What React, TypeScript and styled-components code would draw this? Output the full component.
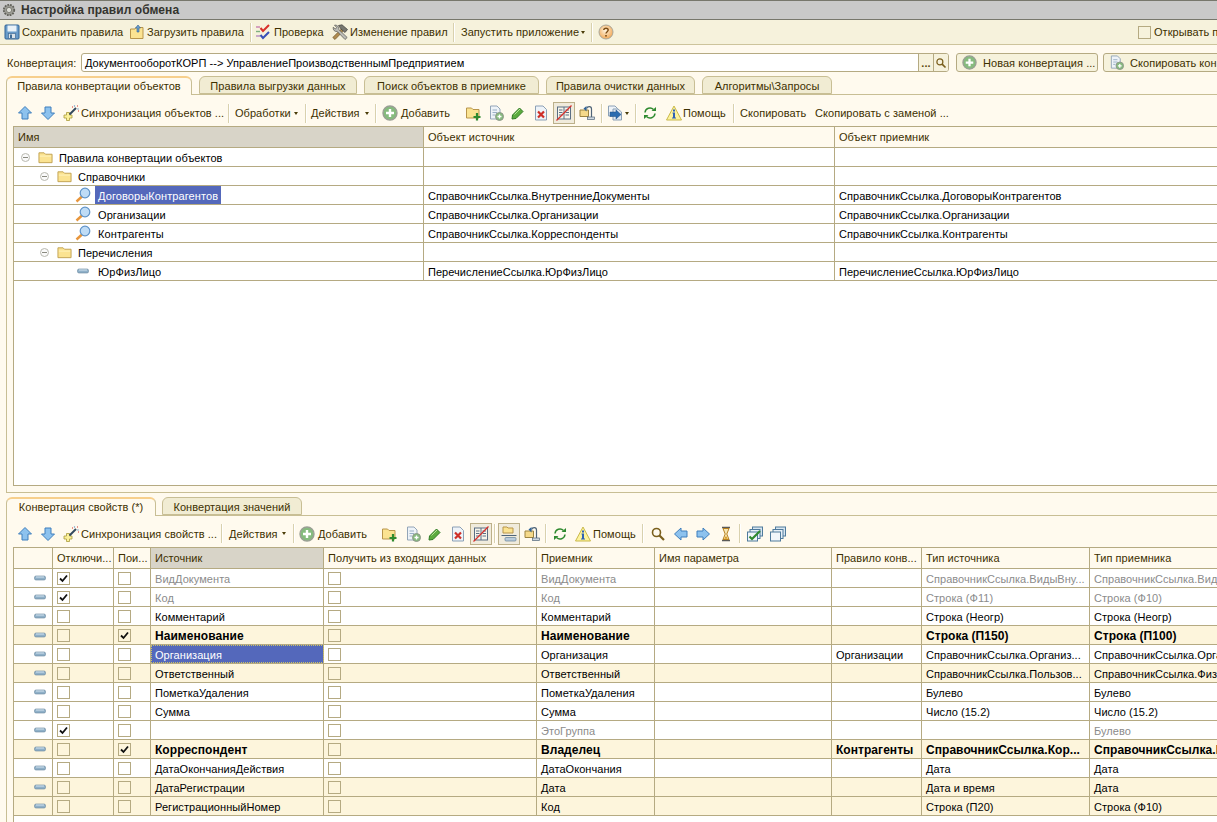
import { FC, ReactNode } from "react"
import styled, { createGlobalStyle } from "styled-components"

const line = "#b5aa82"
const ink = "#3d3000"
const pageBg = "#fffaee"
const barBg = "#f6f2dc"
const tabBg = "#f1ecd3"
const selBg = "#5468bb"
const sortBg = "#d8d4c8"
const creamBg = "#fdf5dc"

const GlobalStyle = createGlobalStyle`
	html, body {
		margin: 0;
		padding: 0;
		background: ${pageBg};
	}
	* {
		box-sizing: border-box;
	}
`

const Screen = styled.div`
	width: 1217px;
	height: 822px;
	overflow: hidden;
	display: flex;
	flex-direction: column;
	background: ${pageBg};
	font-family: "Liberation Sans", Arial, sans-serif;
	font-size: 11px;
	letter-spacing: 0.05px;
	color: ${ink};
`

const TitleBar = styled.div`
	height: 20px;
	flex: none;
	display: flex;
	align-items: center;
	gap: 5px;
	padding-left: 2px;
	background: #c9c9c9;
	border-top: 1px solid #77776c;
	border-bottom: 1px solid #77776c;
`

const TitleText = styled.span`
	font-size: 12px;
	font-weight: bold;
	color: #34342e;
`

const BarStrip = styled.div<{ $h: number; $pad: number; $ruled?: boolean }>`
	height: ${(p) => p.$h}px;
	flex: none;
	display: flex;
	align-items: center;
	padding-left: ${(p) => p.$pad}px;
	${(p) => (p.$ruled ? `background: ${barBg}; border-bottom: 1px solid #cdc49c;` : "")}
`

const Slot = styled.div<{ $w: number }>`
	width: ${(p) => p.$w}px;
	flex: none;
	display: flex;
	align-items: center;
	white-space: nowrap;
`

const Divider = styled.span`
	display: block;
	width: 2px;
	height: 19px;
	border-left: 1px solid #d9d1ae;
	border-right: 1px solid #fff;
`

const Caret = styled.span`
	display: block;
	width: 0;
	height: 0;
	border-left: 2.5px solid transparent;
	border-right: 2.5px solid transparent;
	border-top: 3px solid #4a3c08;
`

const Pressed = styled.span`
	width: 22px;
	height: 22px;
	display: flex;
	align-items: center;
	justify-content: center;
	background: #f0ebdc;
	border: 1px solid #bcb08a;
`

const ConvRow = styled.div`
	flex: none;
	display: flex;
	align-items: center;
	height: 19px;
	margin-top: 8px;
	padding-left: 7px;
`

const ConvLabel = styled.span`
	width: 74px;
	flex: none;
`

const ConvField = styled.div`
	width: 868px;
	height: 19px;
	flex: none;
	display: flex;
	align-items: center;
	background: #fff;
	border: 1px solid ${line};
	border-radius: 3px;
	overflow: hidden;
`

const ConvValue = styled.span`
	flex: 1;
	padding-left: 3px;
	color: #000;
`

const FieldButton = styled.span`
	width: 15px;
	height: 100%;
	display: flex;
	align-items: center;
	justify-content: center;
	background: ${barBg};
	border-left: 1px solid ${line};
	font-weight: bold;
	color: #5a4a10;
`

const ConvButton = styled.div<{ $w: number; $first?: boolean }>`
	width: ${(p) => p.$w}px;
	height: 19px;
	flex: none;
	display: flex;
	align-items: center;
	gap: 6px;
	margin-left: ${(p) => (p.$first ? 7 : 5)}px;
	padding-left: 5px;
	white-space: nowrap;
	background: ${barBg};
	border: 1px solid ${line};
	border-radius: 3px;
`

const TabStrip = styled.div<{ $top: number; $gap: number }>`
	flex: none;
	display: flex;
	gap: ${(p) => p.$gap}px;
	height: 18px;
	margin-top: ${(p) => p.$top}px;
	padding-left: 6px;
	position: relative;
	z-index: 1;
`

const Tab = styled.div<{ $w: number; $active?: boolean }>`
	width: ${(p) => p.$w}px;
	height: ${(p) => (p.$active ? 19 : 18)}px;
	flex: none;
	display: flex;
	align-items: center;
	justify-content: center;
	white-space: nowrap;
	padding: ${(p) => (p.$active ? "0 0 1px" : "1px 0 0")};
	border: 1px solid #c8be94;
	border-bottom: ${(p) => (p.$active ? "none" : "1px solid #c8be94")};
	border-top: ${(p) => (p.$active ? "2px solid #f7cf8c" : "1px solid #c8be94")};
	border-radius: 6px 6px 0 0;
	background: ${(p) => (p.$active ? pageBg : tabBg)};
`

const Panel = styled.div<{ $pad: number; $grow?: boolean }>`
	flex: ${(p) => (p.$grow ? "1" : "none")};
	width: 1225px;
	margin-left: 6px;
	padding: ${(p) => p.$pad}px 0 ${(p) => (p.$grow ? 0 : 6)}px 6px;
	border: 1px solid #c8be94;
	border-right: none;
	border-bottom: ${(p) => (p.$grow ? "none" : "1px solid #c8be94")};
`

const Grid = styled.div<{ $h?: number }>`
	height: ${(p) => (p.$h ? `${p.$h}px` : "auto")};
	background: #fff;
	border: 1px solid ${line};
	border-right: none;
	border-bottom: ${(p) => (p.$h ? `1px solid ${line}` : "none")};
	overflow: hidden;
	color: #000;
`

const GridTail = styled.div`
	height: 120px;
	background: #fff;
	border-left: 1px solid ${line};
`

const Row = styled.div<{ $cols: string; $head?: boolean; $cream?: boolean }>`
	display: grid;
	grid-template-columns: ${(p) => p.$cols};
	height: ${(p) => (p.$head ? 21 : 19)}px;
	border-bottom: 1px solid ${line};
	background: ${(p) => (p.$head ? pageBg : p.$cream ? creamBg : "#fff")};
	color: ${(p) => (p.$head ? ink : "#000")};
`

const Cell = styled.div<{ $sort?: boolean }>`
	display: flex;
	align-items: center;
	min-width: 0;
	padding: 0 4px;
	overflow: hidden;
	white-space: nowrap;
	border-right: 1px solid ${line};
	background: ${(p) => (p.$sort ? sortBg : "transparent")};
`

const BodyCell = styled(Cell)<{ $grey?: boolean; $bold?: boolean; $sel?: boolean }>`
	padding-top: 1px;
	font-size: ${(p) => (p.$bold ? 12 : 11)}px;
	font-weight: ${(p) => (p.$bold ? "bold" : "normal")};
	color: ${(p) => (p.$sel ? "#fff" : p.$grey ? "#8b8b8b" : "inherit")};
	background: ${(p) => (p.$sel ? selBg : "transparent")};
	${(p) => (p.$sel ? "outline: 1px dotted #c9c26a; outline-offset: -1px;" : "")}
`

const MarkCell = styled(Cell)`
	padding-left: 18px;
`

const TreeCell = styled(Cell)<{ $indent: number }>`
	padding-left: ${(p) => p.$indent}px;
`

const Toggle = styled.span`
	width: 9px;
	height: 9px;
	flex: none;
	margin-right: 8px;
	position: relative;
	border: 1px solid #b9b9b0;
	border-radius: 50%;
	background: #fafafa;

	&::after {
		content: "";
		position: absolute;
		left: 1px;
		right: 1px;
		top: 3px;
		height: 1px;
		background: #8a8a80;
	}
`

const NodeName = styled.span`
	margin: 2px 0 0 6px;
`

const LeafName = styled.span<{ $sel?: boolean }>`
	height: 18px;
	display: flex;
	align-items: center;
	margin-left: 4px;
	padding: 1px 3px 0;
	letter-spacing: 0.1px;
	color: ${(p) => (p.$sel ? "#fff" : "#000")};
	background: ${(p) => (p.$sel ? selBg : "transparent")};
`

const Box = styled.span`
	width: 13px;
	height: 13px;
	flex: none;
	display: flex;
	align-items: center;
	justify-content: center;
	border: 1px solid ${line};
	background: transparent;
`

const BoxCell = styled(Cell)`
	padding: 0 0 0 4px;
`

const CheckBox: FC<{ on?: boolean }> = ({ on }) => (
	<Box>
		{on && (
			<svg width="9" height="9" viewBox="0 0 9 9">
				<path d="M1 4.5 L3.5 7 L8 1.5" fill="none" stroke="#111" strokeWidth="1.8" />
			</svg>
		)}
	</Box>
)

const icons: Record<string, ReactNode> = {
	gear: (
		<>
			<circle cx="8" cy="8" r="6" fill="#9b9b94" stroke="#5f5f58" strokeWidth="2" strokeDasharray="2 1.2" />
			<circle cx="8" cy="8" r="3" fill="#dedfd8" stroke="#77776f" />
		</>
	),
	save: (
		<>
			<rect x="1" y="1" width="14" height="14" rx="1" fill="#6a9cc9" stroke="#2f6296" />
			<rect x="3.5" y="1.5" width="9" height="6" fill="#e9f2f8" />
			<rect x="4.5" y="9.5" width="7" height="5" fill="#dbe3e8" stroke="#3f6c96" strokeWidth="0.7" />
			<rect x="6" y="10.5" width="2" height="3.5" fill="#3f6c96" />
		</>
	),
	load: (
		<>
			<path d="M1.5 5 H6 L7 3.5 H14 V14.5 H1.5 Z" fill="#fbe391" stroke="#b8954a" />
			<path d="M9 1 L11.5 4 H10 V8 H8 V4 H6.5 Z" fill="#6a9cc9" stroke="#2f6296" strokeWidth="0.6" />
		</>
	),
	check: (
		<>
			<path d="M1 3 H5" stroke="#c77fb0" strokeWidth="1.4" />
			<path d="M1 7.5 H5" stroke="#7fb07f" strokeWidth="1.4" />
			<path d="M1 12 H5" stroke="#b58ac0" strokeWidth="1.4" />
			<path d="M5.5 4 L8 7 L14 1" fill="none" stroke="#d8302c" strokeWidth="2" />
			<path d="M5.5 11 L8 14 L14 8" fill="none" stroke="#3850b8" strokeWidth="2" />
		</>
	),
	tools: (
		<>
			<path d="M3 15.5 L0.8 13.5 L9.5 4.8 L11.5 6.8 Z" fill="#b08c50" stroke="#6e5426" strokeWidth="0.7" />
			<path d="M6.5 1.5 L10 0.8 L15.5 5.5 L13 8.5 L9 5 Z" fill="#77776f" stroke="#3e3e3e" strokeWidth="0.7" />
			<path d="M13 15.5 L15.2 13.5 L6.8 5.5 C7.2 3 5 0.6 2.5 1.2 L4.6 3.4 L3.4 5 L1.2 3.2 C0.6 6 3 8 5.2 7.4 Z" fill="#bcbcb6" stroke="#55554f" strokeWidth="0.7" />
		</>
	),
	help: (
		<>
			<defs>
				<radialGradient id="helpFill" cx="45%" cy="40%" r="65%">
					<stop offset="0" stopColor="#fff3dc" />
					<stop offset="1" stopColor="#f1a24c" />
				</radialGradient>
			</defs>
			<circle cx="8" cy="8" r="7" fill="url(#helpFill)" stroke="#a9a79a" />
			<path d="M5.8 6 C5.8 3.6 10.2 3.6 10.2 6 C10.2 7.6 8 7.8 8 9.6" fill="none" stroke="#7a4a12" strokeWidth="1.4" />
			<rect x="7.2" y="11" width="1.6" height="1.6" fill="#7a4a12" />
		</>
	),
	up: <path d="M8 1.5 L14.5 8 H11 V14 H5 V8 H1.5 Z" fill="#8dc2ee" stroke="#3f7fbd" />,
	down: <path d="M8 14.5 L14.5 8 H11 V2 H5 V8 H1.5 Z" fill="#8dc2ee" stroke="#3f7fbd" />,
	left: <path d="M1.5 8 L8 2 V5 H14 V11 H8 V14 Z" fill="#8dc2ee" stroke="#3f7fbd" />,
	right: <path d="M14.5 8 L8 2 V5 H2 V11 H8 V14 Z" fill="#8dc2ee" stroke="#3f7fbd" />,
	wand: (
		<>
			<path d="M3.5 7.5 H6.5 V10 H9 V13 H6.5 V15.5 H3.5 V13 H1 V10 H3.5 Z" fill="#fbf09a" stroke="#a89a3a" strokeWidth="0.8" />
			<path d="M6.5 9.5 L13 3" stroke="#33485e" strokeWidth="2" />
			<path d="M9 2 H10 M15 6 H16 M14 1 H15" stroke="#d8302c" strokeWidth="1.2" />
			<path d="M11.5 0.5 V1.5 M15 3.5 V4.5" stroke="#3f7fbd" strokeWidth="1.2" />
		</>
	),
	add: (
		<>
			<circle cx="8" cy="8" r="7" fill="#86bb7e" stroke="#9a9f94" strokeWidth="1.4" />
			<path d="M8 4 V12 M4 8 H12" stroke="#fff" strokeWidth="2.4" />
		</>
	),
	folderPlus: (
		<>
			<path d="M1.5 3 H6.5 L8 4.5 H14 V13 H1.5 Z" fill="#fbe391" stroke="#b8954a" />
			<path d="M12 8 V15.5 M8.5 12 H15.5" stroke="#2f8a2f" strokeWidth="2.2" />
		</>
	),
	folder: (
		<>
			<path d="M1 3 H6.5 L8 4.5 H15 V13.5 H1 Z" fill="#fbe391" stroke="#c0a050" />
			<path d="M2 6 H14 V7 H2 Z" fill="#fff3bd" />
		</>
	),
	folderRow: (
		<>
			<path d="M2 1 H6 L7 2 H12 V7 H2 Z" fill="#fbe391" stroke="#b8954a" />
			<path d="M0.5 9.5 H15.5" stroke="#4f6478" />
			<rect x="4" y="11.5" width="11" height="3.5" rx="1" fill="#b9cbdb" stroke="#64839a" strokeWidth="0.7" />
		</>
	),
	docPlus: (
		<>
			<path d="M2.5 1 H9 L12 4 V14 H2.5 Z" fill="#eef3f8" stroke="#93a5b8" />
			<path d="M4.5 5 H9 M4.5 7.5 H9 M4.5 10 H7" stroke="#9ab0c6" />
			<circle cx="11.5" cy="11.5" r="4" fill="#86bb7e" stroke="#8f968a" />
			<path d="M11.5 9.5 V13.5 M9.5 11.5 H13.5" stroke="#fff" strokeWidth="1.3" />
		</>
	),
	pencil: (
		<>
			<path d="M2.5 10 L9.5 3 L13 6.5 L6 13.5 L2 14 Z" fill="#5cab3f" stroke="#2f7a24" />
			<path d="M4.5 9.5 L10 4" stroke="#b8e29a" />
		</>
	),
	docX: (
		<>
			<path d="M2.5 1 H10 L13.5 4.5 V15 H2.5 Z" fill="#eef3f8" stroke="#8ba0b6" />
			<path d="M5 6.5 L11 12.5 M11 6.5 L5 12.5" stroke="#cf2f27" strokeWidth="2.2" />
		</>
	),
	bookOff: (
		<>
			<rect x="1.5" y="2" width="13" height="12" fill="#f7f5ea" stroke="#5a6e84" />
			<path d="M8 2 V14 M3 5 H6.5 M3 7.5 H6.5 M3 10 H6.5 M9.5 5 H13 M9.5 7.5 H13 M9.5 10 H13" stroke="#5a6e84" />
			<path d="M0.5 15.5 L15.5 0.5" stroke="#d8302c" strokeWidth="1.3" />
		</>
	),
	restore: (
		<>
			<path d="M1 5 H9.5 V11.5 H1 Z" fill="#f5d98a" stroke="#9c8340" />
			<path d="M12.5 12 V4 C12.5 0.8 8.5 0.8 7.5 3.5" fill="none" stroke="#4f6478" strokeWidth="1.2" />
			<path d="M4.5 3.5 L7.5 1 V6.5 Z" fill="#2f6296" />
			<rect x="8.5" y="12" width="7" height="2.5" fill="#cfd8e0" stroke="#4f6478" strokeWidth="0.7" />
		</>
	),
	exportDoc: (
		<>
			<path d="M1.5 1 H8 L10.5 3.5 V11 H1.5 Z" fill="#eef3f8" stroke="#8ba0b6" />
			<path d="M6 4 H11 L14.5 7 V15 H6 Z" fill="#dfe9f2" stroke="#8ba0b6" />
			<path d="M3 7 H9 V5 L14 9.5 L9 14 V11.5 H3 Z" fill="#2a6cb0" stroke="#1e4f85" strokeWidth="0.5" />
		</>
	),
	refresh: (
		<>
			<path d="M3 7.5 A5 5 0 0 1 11.5 4.5" fill="none" stroke="#2f8a2f" strokeWidth="1.5" />
			<path d="M13 8.5 A5 5 0 0 1 4.5 11.5" fill="none" stroke="#2f8a2f" strokeWidth="1.5" />
			<path d="M9.5 6 H14 V2 Z M6.5 10 H2 V14 Z" fill="#2f8a2f" />
		</>
	),
	info: (
		<>
			<path d="M8 1 L15.5 15 H0.5 Z" fill="#fdf39d" stroke="#c9b84a" strokeLinejoin="round" />
			<rect x="7" y="4.5" width="2" height="2" fill="#2f62b5" />
			<path d="M6.5 7.5 H9 V12.5 H10 V13.5 H6 V12.5 H7 V8.5 H6.5 Z" fill="#2f62b5" />
		</>
	),
	search: (
		<>
			<circle cx="6.5" cy="6.5" r="4" fill="none" stroke="#7a5f1c" strokeWidth="1.6" />
			<path d="M9.5 9.5 L14 14" stroke="#7a5f1c" strokeWidth="2.2" />
		</>
	),
	hourglass: (
		<>
			<path d="M4 1.5 H12 M4 14.5 H12" stroke="#5a5a58" strokeWidth="1.5" />
			<path d="M5 2.5 H11 L8.8 8 L11 13.5 H5 L7.2 8 Z" fill="#f6e6b5" stroke="#b7801f" />
			<path d="M6.2 12.8 H9.8 L8 10 Z" fill="#d99a1e" />
		</>
	),
	winCheck: (
		<>
			<rect x="5.5" y="1" width="10" height="9" fill="#d8e6f1" stroke="#4f7a9c" />
			<rect x="3" y="3.5" width="10" height="9" fill="#e7f0f7" stroke="#4f7a9c" />
			<rect x="0.5" y="6" width="10" height="9" fill="#f1f6fa" stroke="#4f7a9c" />
			<path d="M2.5 10.5 L5 13 L13 5" fill="none" stroke="#2f8a2f" strokeWidth="2.2" />
		</>
	),
	win: (
		<>
			<rect x="5.5" y="1" width="10" height="9" fill="#d8e6f1" stroke="#4f7a9c" />
			<rect x="3" y="3.5" width="10" height="9" fill="#e7f0f7" stroke="#4f7a9c" />
			<rect x="0.5" y="6" width="10" height="9" fill="#f1f6fa" stroke="#4f7a9c" />
		</>
	),
	dash: (
		<>
			<rect x="2.5" y="6" width="11" height="4" rx="1.5" fill="#8fb0c8" stroke="#64839a" strokeWidth="0.6" />
			<path d="M4 7 H12" stroke="#d5e4ef" />
		</>
	),
	lens: (
		<>
			<path d="M7.5 9 L1.5 14.5" stroke="#e8963c" strokeWidth="2.4" />
			<circle cx="10" cy="6" r="4.8" fill="#bfdcf6" stroke="#5f93c8" strokeWidth="1.2" />
		</>
	),
}

const Icon: FC<{ name: string; size?: number }> = ({ name, size = 16 }) => (
	<svg width={size} height={size} viewBox="0 0 16 16" style={{ flex: "none", display: "block" }}>
		{icons[name]}
	</svg>
)

type BarItem = {
	x: number
	icon?: string
	text?: string
	sep?: boolean
	caret?: boolean
	pressed?: string
	box?: boolean
}

const Bar: FC<{ items: BarItem[]; origin: number; end: number; height: number; ruled?: boolean }> = ({
	items,
	origin,
	end,
	height,
	ruled,
}) => (
	<BarStrip $h={height} $pad={items[0].x - origin} $ruled={ruled}>
		{items.map((item, i) => (
			<Slot key={item.x} $w={(items[i + 1]?.x ?? end) - item.x}>
				{item.icon && <Icon name={item.icon} />}
				{item.text && <span>{item.text}</span>}
				{item.sep && <Divider />}
				{item.caret && <Caret />}
				{item.box && <CheckBox />}
				{item.pressed && (
					<Pressed>
						<Icon name={item.pressed} />
					</Pressed>
				)}
			</Slot>
		))}
	</BarStrip>
)

const mainBar: BarItem[] = [
	{ x: 4, icon: "save" },
	{ x: 22, text: "Сохранить правила" },
	{ x: 129, icon: "load" },
	{ x: 147, text: "Загрузить правила" },
	{ x: 250, sep: true },
	{ x: 255, icon: "check" },
	{ x: 274, text: "Проверка" },
	{ x: 332, icon: "tools" },
	{ x: 350, text: "Изменение правил" },
	{ x: 453, sep: true },
	{ x: 461, text: "Запустить приложение" },
	{ x: 581, caret: true },
	{ x: 591, sep: true },
	{ x: 598, icon: "help" },
	{ x: 1138, box: true },
	{ x: 1154, text: "Открывать п" },
]

const objectBar: BarItem[] = [
	{ x: 17, icon: "up" },
	{ x: 40, icon: "down" },
	{ x: 63, icon: "wand" },
	{ x: 81, text: "Синхронизация объектов ..." },
	{ x: 228, sep: true },
	{ x: 235, text: "Обработки" },
	{ x: 294, caret: true },
	{ x: 305, sep: true },
	{ x: 311, text: "Действия" },
	{ x: 365, caret: true },
	{ x: 375, sep: true },
	{ x: 382, icon: "add" },
	{ x: 401, text: "Добавить" },
	{ x: 465, icon: "folderPlus" },
	{ x: 488, icon: "docPlus" },
	{ x: 510, icon: "pencil" },
	{ x: 533, icon: "docX" },
	{ x: 553, pressed: "bookOff" },
	{ x: 579, icon: "restore" },
	{ x: 601, sep: true },
	{ x: 607, icon: "exportDoc" },
	{ x: 625, caret: true },
	{ x: 635, sep: true },
	{ x: 642, icon: "refresh" },
	{ x: 666, icon: "info" },
	{ x: 683, text: "Помощь" },
	{ x: 733, sep: true },
	{ x: 740, text: "Скопировать" },
	{ x: 815, text: "Скопировать с заменой ..." },
]

const propertyBar: BarItem[] = [
	{ x: 17, icon: "up" },
	{ x: 40, icon: "down" },
	{ x: 63, icon: "wand" },
	{ x: 81, text: "Синхронизация свойств ..." },
	{ x: 221, sep: true },
	{ x: 229, text: "Действия" },
	{ x: 282, caret: true },
	{ x: 293, sep: true },
	{ x: 299, icon: "add" },
	{ x: 318, text: "Добавить" },
	{ x: 381, icon: "folderPlus" },
	{ x: 405, icon: "docPlus" },
	{ x: 427, icon: "pencil" },
	{ x: 450, icon: "docX" },
	{ x: 470, pressed: "bookOff" },
	{ x: 494, sep: true },
	{ x: 498, pressed: "folderRow" },
	{ x: 524, icon: "restore" },
	{ x: 545, sep: true },
	{ x: 552, icon: "refresh" },
	{ x: 575, icon: "info" },
	{ x: 593, text: "Помощь" },
	{ x: 642, sep: true },
	{ x: 650, icon: "search" },
	{ x: 673, icon: "left" },
	{ x: 695, icon: "right" },
	{ x: 718, icon: "hourglass" },
	{ x: 739, sep: true },
	{ x: 747, icon: "winCheck" },
	{ x: 770, icon: "win" },
]

const treeCols = "410px 411px 1fr"
const propCols = "39px 61px 37px 173px 213px 118px 177px 90px 168px 168px"

type TreeNode = {
	name: string
	depth?: number
	leaf?: string
	sel?: boolean
	source?: string
	target?: string
}

const tree: TreeNode[] = [
	{ name: "Правила конвертации объектов", depth: 0 },
	{ name: "Справочники", depth: 1 },
	{
		name: "ДоговорыКонтрагентов",
		leaf: "lens",
		sel: true,
		source: "СправочникСсылка.ВнутренниеДокументы",
		target: "СправочникСсылка.ДоговорыКонтрагентов",
	},
	{
		name: "Организации",
		leaf: "lens",
		source: "СправочникСсылка.Организации",
		target: "СправочникСсылка.Организации",
	},
	{
		name: "Контрагенты",
		leaf: "lens",
		source: "СправочникСсылка.Корреспонденты",
		target: "СправочникСсылка.Контрагенты",
	},
	{ name: "Перечисления", depth: 1 },
	{
		name: "ЮрФизЛицо",
		leaf: "dash",
		source: "ПеречислениеСсылка.ЮрФизЛицо",
		target: "ПеречислениеСсылка.ЮрФизЛицо",
	},
]

type PropRow = {
	off?: boolean
	find?: boolean
	source: string
	target: string
	rule?: string
	sourceType: string
	targetType: string
	grey?: boolean
	bold?: boolean
	cream?: boolean
	sel?: boolean
}

const props: PropRow[] = [
	{
		off: true,
		source: "ВидДокумента",
		target: "ВидДокумента",
		sourceType: "СправочникСсылка.ВидыВну...",
		targetType: "СправочникСсылка.ВидыВнутренних",
		grey: true,
	},
	{ off: true, source: "Код", target: "Код", sourceType: "Строка (Ф11)", targetType: "Строка (Ф10)", grey: true },
	{ source: "Комментарий", target: "Комментарий", sourceType: "Строка (Неогр)", targetType: "Строка (Неогр)" },
	{
		find: true,
		source: "Наименование",
		target: "Наименование",
		sourceType: "Строка (П150)",
		targetType: "Строка (П100)",
		bold: true,
		cream: true,
	},
	{
		source: "Организация",
		target: "Организация",
		rule: "Организации",
		sourceType: "СправочникСсылка.Организ...",
		targetType: "СправочникСсылка.Организации",
		sel: true,
	},
	{
		source: "Ответственный",
		target: "Ответственный",
		sourceType: "СправочникСсылка.Пользов...",
		targetType: "СправочникСсылка.ФизическиеЛица",
		cream: true,
	},
	{ source: "ПометкаУдаления", target: "ПометкаУдаления", sourceType: "Булево", targetType: "Булево" },
	{ source: "Сумма", target: "Сумма", sourceType: "Число (15.2)", targetType: "Число (15.2)" },
	{ off: true, source: "", target: "ЭтоГруппа", sourceType: "", targetType: "Булево", grey: true },
	{
		find: true,
		source: "Корреспондент",
		target: "Владелец",
		rule: "Контрагенты",
		sourceType: "СправочникСсылка.Кор...",
		targetType: "СправочникСсылка.Контрагенты",
		bold: true,
		cream: true,
	},
	{ source: "ДатаОкончанияДействия", target: "ДатаОкончания", sourceType: "Дата", targetType: "Дата" },
	{ source: "ДатаРегистрации", target: "Дата", sourceType: "Дата и время", targetType: "Дата", cream: true },
	{
		source: "РегистрационныйНомер",
		target: "Код",
		sourceType: "Строка (П20)",
		targetType: "Строка (Ф10)",
		cream: true,
	},
]

const propHeads = [
	"",
	"Отключи...",
	"Пои...",
	"Источник",
	"Получить из входящих данных",
	"Приемник",
	"Имя параметра",
	"Правило конв...",
	"Тип источника",
	"Тип приемника",
]

export default function App() {
	return (
		<Screen>
			<GlobalStyle />
			<TitleBar>
				<Icon name="gear" size={14} />
				<TitleText>Настройка правил обмена</TitleText>
			</TitleBar>
			<Bar items={mainBar} origin={0} end={1217} height={25} ruled />
			<ConvRow>
				<ConvLabel>Конвертация:</ConvLabel>
				<ConvField>
					<ConvValue>ДокументооборотКОРП --&gt; УправлениеПроизводственнымПредприятием</ConvValue>
					<FieldButton>...</FieldButton>
					<FieldButton>
						<Icon name="search" size={12} />
					</FieldButton>
				</ConvField>
				<ConvButton $w={142} $first>
					<Icon name="add" size={15} />
					Новая конвертация ...
				</ConvButton>
				<ConvButton $w={200}>
					<Icon name="docPlus" size={15} />
					Скопировать конвертацию
				</ConvButton>
			</ConvRow>
			<TabStrip $top={4} $gap={7}>
				<Tab $w={186} $active>
					Правила конвертации объектов
				</Tab>
				<Tab $w={158}>Правила выгрузки данных</Tab>
				<Tab $w={175}>Поиск объектов в приемнике</Tab>
				<Tab $w={149}>Правила очистки данных</Tab>
				<Tab $w={130}>Алгоритмы\Запросы</Tab>
			</TabStrip>
			<Panel $pad={5}>
				<Bar items={objectBar} origin={13} end={1000} height={26} />
				<Grid $h={360}>
					<Row $cols={treeCols} $head>
						<Cell $sort>Имя</Cell>
						<Cell>Объект источник</Cell>
						<Cell>Объект приемник</Cell>
					</Row>
					{tree.map((node) => (
						<Row key={node.name} $cols={treeCols}>
							{node.leaf ? (
								<TreeCell $indent={61}>
									<Icon name={node.leaf} />
									<LeafName $sel={node.sel}>{node.name}</LeafName>
								</TreeCell>
							) : (
								<TreeCell $indent={7 + (node.depth ?? 0) * 19}>
									<Toggle />
									<Icon name="folder" size={15} />
									<NodeName>{node.name}</NodeName>
								</TreeCell>
							)}
							<BodyCell>{node.source}</BodyCell>
							<BodyCell>{node.target}</BodyCell>
						</Row>
					))}
				</Grid>
			</Panel>
			<TabStrip $top={4} $gap={6}>
				<Tab $w={150} $active>
					Конвертация свойств (*)
				</Tab>
				<Tab $w={140}>Конвертация значений</Tab>
			</TabStrip>
			<Panel $pad={4} $grow>
				<Bar items={propertyBar} origin={13} end={800} height={27} />
				<Grid>
					<Row $cols={propCols} $head>
						{propHeads.map((head, i) => (
							<Cell key={i} $sort={head === "Источник"}>
								{head}
							</Cell>
						))}
					</Row>
					{props.map((row) => (
						<Row key={row.target + row.sourceType} $cols={propCols} $cream={row.cream}>
							<MarkCell>
								<Icon name="dash" />
							</MarkCell>
							<BoxCell>
								<CheckBox on={row.off} />
							</BoxCell>
							<BoxCell>
								<CheckBox on={row.find} />
							</BoxCell>
							<BodyCell $grey={row.grey} $bold={row.bold} $sel={row.sel}>
								{row.source}
							</BodyCell>
							<BoxCell>
								<CheckBox />
							</BoxCell>
							<BodyCell $grey={row.grey} $bold={row.bold}>
								{row.target}
							</BodyCell>
							<Cell />
							<BodyCell $bold={row.bold}>{row.rule}</BodyCell>
							<BodyCell $grey={row.grey} $bold={row.bold}>
								{row.sourceType}
							</BodyCell>
							<BodyCell $grey={row.grey} $bold={row.bold}>
								{row.targetType}
							</BodyCell>
						</Row>
					))}
				</Grid>
				<GridTail />
			</Panel>
		</Screen>
	)
}
